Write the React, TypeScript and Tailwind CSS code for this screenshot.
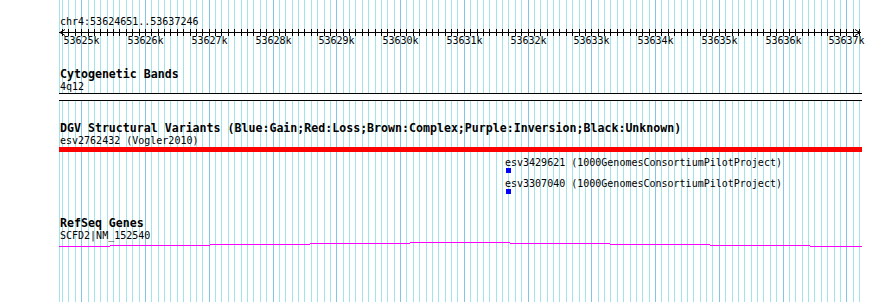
const START = 53624651;
const END = 53637246;
const LEFT = 59;
const WIDTH = 803;
const scale = WIDTH / (END - START + 1);
const toX = (bp: number) => LEFT + (bp - START) * scale;

const ticks: { x: number; major: boolean; bp: number }[] = [];
for (let bp = Math.ceil(START / 100) * 100; bp <= END; bp += 100) {
  ticks.push({ x: Math.round(toX(bp)), major: bp % 1000 === 0, bp });
}

const geneSegments: [number, number, number][] = [
  [59, 110, 246],
  [110, 210, 245],
  [210, 310, 244],
  [310, 410, 243],
  [410, 510, 242],
  [510, 610, 243],
  [610, 710, 244],
  [710, 810, 245],
  [810, 862, 246],
];

function Grid() {
  return (
    <svg className="absolute inset-0" width={890} height={302}>
      <line x1={LEFT + 0.5} x2={LEFT + 0.5} y1={0} y2={302} stroke="#a3e4ea" />
      {ticks.map((t) => (
        <line
          key={t.bp}
          x1={t.x + 0.5}
          x2={t.x + 0.5}
          y1={0}
          y2={302}
          stroke={t.major ? "#86c4e6" : "#a3e4ea"}
        />
      ))}
    </svg>
  );
}

function Ruler() {
  return (
    <div className="relative h-[20px]">
      <svg className="absolute left-0 top-0" width={890} height={8}>
        <line x1={LEFT} x2={LEFT + WIDTH - 1} y1={4.5} y2={4.5} stroke="#000" />
        <polyline points={`${LEFT + 6},1.5 ${LEFT + 1},4.5 ${LEFT + 6},7.5`} fill="none" stroke="#000" />
        <polyline
          points={`${LEFT + WIDTH - 7},1.5 ${LEFT + WIDTH - 2},4.5 ${LEFT + WIDTH - 7},7.5`}
          fill="none"
          stroke="#000"
        />
        {ticks.map((t) => (
          <line key={t.bp} x1={t.x + 0.5} x2={t.x + 0.5} y1={1} y2={8} stroke="#000" />
        ))}
      </svg>
      {ticks
        .filter((t) => t.major)
        .map((t) => (
          <span
            key={t.bp}
            className="absolute top-[6px] w-[36px] text-center leading-[13px]"
            style={{ left: t.x - 17.5 }}
          >
            {t.bp / 1000}k
          </span>
        ))}
    </div>
  );
}

function Title({ children }: { children: React.ReactNode }) {
  return <div className="h-[12px] pl-[60px] text-[11.6px] font-bold leading-[12px]">{children}</div>;
}

export default function App() {
  return (
    <div className="relative h-[302px] w-[890px] overflow-hidden bg-white font-['DejaVu_Sans_Mono',monospace] text-[10px] text-black">
      <Grid />
      <div className="relative pt-[15px]">
        <div className="h-[13px] pl-[60px] leading-[13px]">chr4:53624651..53637246</div>
        <Ruler />

        <div className="mt-[20px]">
          <Title>Cytogenetic Bands</Title>
          <div className="h-[13px] pl-[60px] leading-[13px]">4q12</div>
          <div className="ml-[59px] h-[8px] w-[803px] border-y border-black bg-white" />
        </div>

        <div className="mt-[21px]">
          <Title>DGV Structural Variants (Blue:Gain;Red:Loss;Brown:Complex;Purple:Inversion;Black:Unknown)</Title>
          <div className="h-[13px] pl-[60px] leading-[13px]">esv2762432 (Vogler2010)</div>
          <div className="ml-[59px] h-[5px] w-[803px] bg-[#ff0000]" />
          <div className="mt-[4px] h-[12px] pl-[505px] leading-[13px]">
            esv3429621 (1000GenomesConsortiumPilotProject)
          </div>
          <div className="ml-[506px] h-[5px] w-[5px] bg-[#0000ff]" />
          <div className="mt-[4px] h-[12px] pl-[505px] leading-[13px]">
            esv3307040 (1000GenomesConsortiumPilotProject)
          </div>
          <div className="ml-[506px] h-[5px] w-[5px] bg-[#0000ff]" />
        </div>

        <div className="mt-[23px]">
          <Title>RefSeq Genes</Title>
          <div className="h-[12px] pl-[60px] leading-[13px]">SCFD2|NM_152540</div>
          <svg className="block" width={890} height={7}>
            {geneSegments.map(([x1, x2, y]) => (
              <line key={x1} x1={x1} x2={x2} y1={y - 241 + 0.5} y2={y - 241 + 0.5} stroke="#ff00ff" />
            ))}
          </svg>
        </div>
      </div>
    </div>
  );
}
